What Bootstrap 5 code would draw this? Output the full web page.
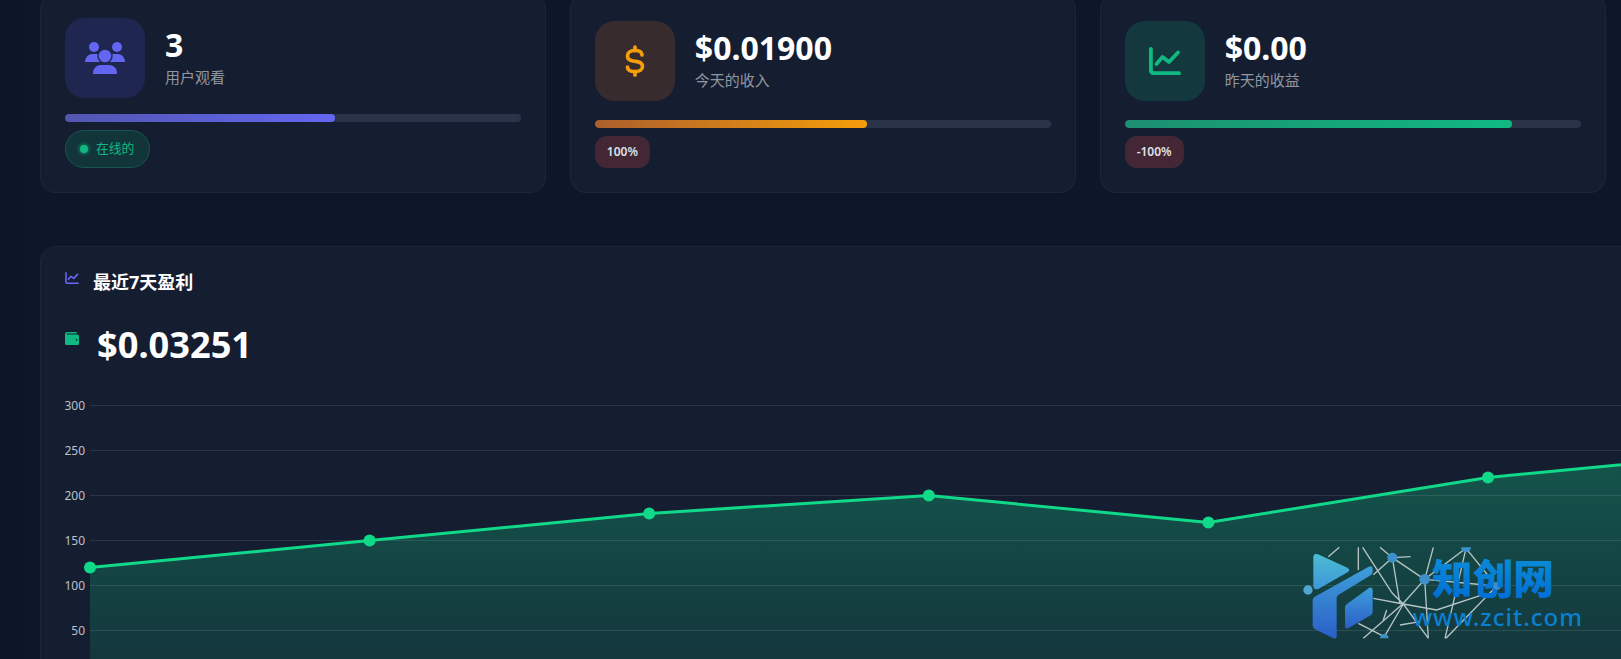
<!DOCTYPE html>
<html lang="zh">
<head>
    <meta charset="utf-8">
    <title>收益概览</title>
    <link href="https://cdn.jsdelivr.net/npm/bootstrap@5.3.0/dist/css/bootstrap.min.css" rel="stylesheet">
    <style>
        html, body { height: 659px; overflow: hidden; }
        body { background: linear-gradient(90deg, #0c1428 0, #0e1629 40px, #0e1629 100%); color: #fff; font-family: "Noto Sans", "Noto Sans CJK SC", sans-serif; }
        .page-wrap { position: relative; height: 659px; overflow: hidden; padding: 0 15.500px 0 40px; }
        .stat-grid { display: grid; grid-template-columns: repeat(3, 1fr); gap: 24px; margin-top: -7px; }
        .panel-box { background: #151e31; border: 1px solid rgba(255,255,255,.035); border-radius: 16px; padding: 24px; }
        .stat-box { display: flex; flex-direction: column; justify-content: flex-end; }
        .icon-tile { width: 80px; height: 80px; border-radius: 20px; flex: none; }
        .tile-indigo { background: #1f2750; }
        .tile-amber { background: #372b2e; }
        .tile-green { background: #13383e; }
        .stat-num { font-size: 32px; font-weight: 700; line-height: 32px; }
        .stat-label { font-size: 15px; line-height: 20px; color: #92969f; margin-top: 6px; }
        .head-tall { margin-bottom: 19px; }
        .head-short { margin-bottom: 16px; }
        .bar-track { height: 8px; border-radius: 4px; background: #2a3347; margin-bottom: 8px; overflow: hidden; }
        .bar-fill { height: 100%; border-radius: 4px; }
        .fill-indigo { background: linear-gradient(90deg, #5356b0, #6366f1); }
        .fill-amber { background: linear-gradient(90deg, #ac5f2b, #f59e0b); }
        .fill-green { background: linear-gradient(90deg, #1c8f70, #10b981); }
        .online-pill { display: inline-flex; align-items: center; gap: 8px; height: 38px; padding: 0 15px 0 14px; border-radius: 19px; background: #12353a; border: 1px solid #17564f; color: #10b981; font-size: 12.8px; align-self: flex-start; }
        .online-dot { width: 8px; height: 8px; border-radius: 50%; background: #10b981; box-shadow: 0 0 4px #10b981; }
        .pct-pill { display: inline-flex; align-items: center; height: 32px; padding: 0 12px; border-radius: 12px; background: #432735; color: #dfe1e6; font-size: 12px; font-weight: 600; align-self: flex-start; }
        .chart-box { width: 1780px; margin-top: 53px; padding-bottom: 0; }
        .chart-title { font-size: 18px; font-weight: 700; line-height: 24px; }
        .title-icon { margin: 1px 14px 0 0; }
        .title-text { margin-top: -1px; }
        .total-row { margin-top: 26px; }
        .wallet-icon { margin: 12px 18px 0 0; }
        .total-num { font-size: 36.200px; font-weight: 700; line-height: 48px; }
        .chart-svg { display: block; margin-top: 22px; }
        .axis-label { font-size: 12px; fill: #bcc0c9; font-family: "Noto Sans", sans-serif; }
        .logo-mark { position: absolute; right: 0; bottom: 0; width: 341px; height: 129px; }
    </style>
</head>
<body>
<div class="page-wrap">
    <div class="stat-grid">
        <div class="panel-box stat-box">
            <div class="d-flex align-items-center gap-3 head-short">
                <div class="icon-tile tile-indigo d-flex align-items-center justify-content-center">
                    <svg width="40" height="32" viewBox="0 0 40 32" fill="#6366f1">
                        <circle cx="9" cy="5" r="5"/>
                        <circle cx="32" cy="5" r="5"/>
                        <path d="M0 20c0-4 3-8 7-8h5c2 0 3 1 4 2l1 6z"/>
                        <path d="M40 20c0-4-3-8-7-8h-5c-2 0-3 1-4 2l-1 6z"/>
                        <circle cx="20" cy="14" r="7" stroke="#1f2750" stroke-width="1.4"/>
                        <path d="M8 32v-1c0-5 4-8 8-8h8c4 0 8 3 8 8v1z"/>
                    </svg>
                </div>
                <div class="ms-1">
                    <div class="stat-num">3</div>
                    <div class="stat-label">用户观看</div>
                </div>
            </div>
            <div class="bar-track"><div class="bar-fill fill-indigo" style="width:59.2%"></div></div>
            <div class="online-pill"><span class="online-dot"></span>在线的</div>
        </div>
        <div class="panel-box stat-box">
            <div class="d-flex align-items-center gap-3 head-tall">
                <div class="icon-tile tile-amber d-flex align-items-center justify-content-center">
                    <svg width="20" height="32" viewBox="0 0 20 32" fill="none" stroke="#f59e0b" stroke-width="3.700" stroke-linecap="round">
                        <path d="M10 2v3.500M10 26.500V30"/>
                        <path d="M17 10C17 7 14 5.500 10.500 5.500H9.500C5 5.500 2.500 8 2.500 11 2.500 14 5 15.500 8 16l4 .6c3.500.5 5.500 2.400 5.500 4.900 0 3-3 5-6.500 5H9c-3.500 0-6.500-1.500-6.500-4.500"/>
                    </svg>
                </div>
                <div class="ms-1">
                    <div class="stat-num">$0.01900</div>
                    <div class="stat-label">今天的收入</div>
                </div>
            </div>
            <div class="bar-track"><div class="bar-fill fill-amber" style="width:59.8%"></div></div>
            <div class="pct-pill">100%</div>
        </div>
        <div class="panel-box stat-box">
            <div class="d-flex align-items-center gap-3 head-tall">
                <div class="icon-tile tile-green d-flex align-items-center justify-content-center">
                    <svg width="32" height="28" viewBox="0 0 32 28" fill="none" stroke="#10b981" stroke-width="3.800" stroke-linecap="round" stroke-linejoin="round">
                        <path d="M1.900 1.900V23c0 2 1.400 3.200 3.200 3.200h25"/>
                        <path d="M7.500 17l6-7 6.500 5 9-9.500"/>
                    </svg>
                </div>
                <div class="ms-1">
                    <div class="stat-num">$0.00</div>
                    <div class="stat-label">昨天的收益</div>
                </div>
            </div>
            <div class="bar-track"><div class="bar-fill fill-green" style="width:85%"></div></div>
            <div class="pct-pill">-100%</div>
        </div>
    </div>

    <div class="panel-box chart-box">
        <div class="d-flex align-items-start chart-title">
            <svg class="title-icon" width="14" height="12" viewBox="0 0 32 28" fill="none" stroke="#6366f1" stroke-width="3.800" stroke-linecap="round" stroke-linejoin="round">
                <path d="M1.900 1.900V23c0 2 1.400 3.200 3.200 3.200h25"/>
                <path d="M7.500 17l6-7 6.500 5 9-9.500"/>
            </svg>
            <span class="title-text">最近7天盈利</span>
        </div>
        <div class="d-flex align-items-start total-row">
            <svg class="wallet-icon" width="14" height="13" viewBox="0 0 14 13">
                <path d="M2 0h9.500a1 1 0 0 1 0 1.500H1.500A.8.8 0 0 0 2 2.500h10.500A1.500 1.500 0 0 1 14 4v7.500a1.500 1.500 0 0 1-1.500 1.500h-11A1.500 1.500 0 0 1 0 11.500V2a2 2 0 0 1 2-2z" fill="#10b981"/>
                <circle cx="11.600" cy="7.800" r=".9" fill="#151e31"/>
            </svg>
            <span class="total-num">$0.03251</span>
        </div>
        <svg class="chart-svg" id="chart" width="1720" height="285"></svg>
    </div>

    <svg class="logo-mark" viewBox="0 0 1023 387">
        <defs>
            <linearGradient id="logoA" x1="0" y1="0" x2="0" y2="1"><stop offset="0" stop-color="#4cbcd2"/><stop offset="1" stop-color="#3d97d9"/></linearGradient>
            <linearGradient id="logoB" x1="0" y1="0" x2="0" y2="1"><stop offset="0" stop-color="#3f9ed8"/><stop offset="1" stop-color="#2a5fc8"/></linearGradient>
            <linearGradient id="logoT" x1="0" y1="0" x2="0" y2="1"><stop offset="0" stop-color="#0d93d6"/><stop offset="1" stop-color="#0069d6"/></linearGradient>
        </defs>
        <g stroke="#dfe6e6" stroke-opacity=".8" stroke-width="4" fill="none">
            <path d="M145 80L178 52M248 52L337 190 370 222 445 325M300 52L337 83 434 148 368 222 250 325M337 83L360 222M337 83L392 80M280 134L337 83M434 148L650 168M434 148L460 52M434 148L445 325M558 55L434 148M558 55L650 168 498 325M558 55L495 325M280 205L370 222 470 240 620 190M235 280L313 320M370 222L313 320M360 285L420 275M310 270L320 240M235 52V120"/>
        </g>
        <circle cx="337" cy="83" r="15" fill="#3f8fcb"/>
        <circle cx="434" cy="148" r="16" fill="#3f8fcb"/>
        <path d="M543 52a15 15 0 0 0 30 0z" fill="#3f8fcb"/>
        <circle cx="650" cy="168" r="12" fill="#3f8fcb"/>
        <path d="M300 325a13 13 0 0 1 26 0z" fill="#3f8fcb"/>
        <circle cx="84" cy="180" r="14" fill="#4fa7d0"/>
        <path d="M100 82q0-14 14-9l88 40q10 6 2 13l-88 50q-16 6-16-10z" fill="url(#logoA)"/>
        <path d="M98 210q0-6 6-10l162-90q12-4 12 8v8q0 6-6 10l-96 58q-6 4-6 10v115q0 10-10 6l-56-28q-6-4-6-10z" fill="url(#logoB)"/>
        <path d="M195 232q0-6 6-10l66-48q11-5 11 8v64q0 6-6 10l-66 38q-11 5-11-6z" fill="url(#logoB)"/>
        <text x="456" y="192" font-family="Noto Sans CJK SC" font-weight="900" font-size="122" fill="url(#logoT)">知创网</text>
        <text x="398" y="288" font-family="Noto Sans" font-weight="500" font-size="72" textLength="508" fill="#0b7fd0">www.zcit.com</text>
    </svg>
</div>

<script>
    // chart drawn by hand, x/y are page pixels minus the svg offset
    var chart = document.getElementById('chart');
    var values = [120, 150, 180, 200, 170, 220, 250];
    var x0 = 25, stepX = 279.6, top0 = 15.5, perUnit = 0.9;
    function yOf(v) { return top0 + (300 - v) * perUnit; }
    function xOf(i) { return x0 + i * stepX; }
    var html = '<defs><linearGradient id="areaFill" x1="0" y1="0" x2="0" y2="1">' +
        '<stop offset="0" stop-color="#10d98a" stop-opacity=".3"/>' +
        '<stop offset="1" stop-color="#10d98a" stop-opacity=".12"/></linearGradient></defs>';
    var area = 'M' + x0 + ' ' + yOf(0);
    var line = '';
    values.forEach(function (v, i) {
        area += 'L' + xOf(i) + ' ' + yOf(v);
        line += (i ? 'L' : 'M') + xOf(i) + ' ' + yOf(v);
    });
    area += 'L' + xOf(values.length - 1) + ' ' + yOf(0) + 'Z';
    html += '<path d="' + area + '" fill="url(#areaFill)"/>';
    [300, 250, 200, 150, 100, 50].forEach(function (v) {
        var y = yOf(v);
        html += '<line x1="' + x0 + '" x2="1720" y1="' + y + '" y2="' + y + '" stroke="#fff" stroke-opacity=".1"/>';
        html += '<text class="axis-label" x="20" y="' + (y + 4) + '" text-anchor="end">' + v + '</text>';
    });
    html += '<path d="' + line + '" fill="none" stroke="#10d98a" stroke-width="3"/>';
    values.forEach(function (v, i) {
        html += '<circle cx="' + xOf(i) + '" cy="' + yOf(v) + '" r="6" fill="#10d98a"/>';
    });
    chart.innerHTML = html;
</script>
<script src="https://cdn.jsdelivr.net/npm/bootstrap@5.3.0/dist/js/bootstrap.bundle.min.js"></script>
</body>
</html>
